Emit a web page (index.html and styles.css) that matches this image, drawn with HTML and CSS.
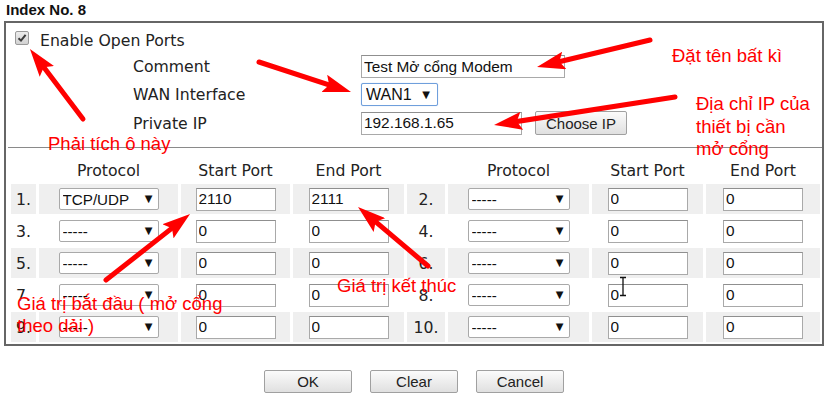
FILE: index.html
```html
<!DOCTYPE html>
<html lang="vi">
  <head>
    <meta charset="UTF-8" />
    <meta name="viewport" content="width=device-width, initial-scale=1.0" />
    <title>Open Ports - Index No. 8</title>
    <link rel="stylesheet" href="styles.css">
  </head>
  <body>
    <div class="page">
      <div class="title">Index No. 8</div>
      <div class="box">
        <!-- bật mở cổng -->
        <div class="enable">
          <span class="check">
            <svg width="12" height="12" viewBox="0 0 12 12"><path d="M2.5 6.2 L5 8.6 L9.6 2.8" fill="none" stroke="#3c3c3c" stroke-width="2"/></svg>
          </span>
          <span class="enable-label">Enable Open Ports</span>
        </div>
        <!-- thông tin chung -->
        <div class="form">
          <label>Comment</label>
          <input class="text comment" type="text" value="Test Mở cổng Modem" />
          <label>WAN Interface</label>
          <span class="select wan"><select><option>WAN1</option></select></span>
          <label>Private IP</label>
          <div class="ip-row">
            <input class="text ip" type="text" value="192.168.1.65" />
            <button class="btn choose">Choose IP</button>
          </div>
        </div>
        <div class="divider"></div>
        <!-- bảng cổng -->
        <div class="ports">
          <div></div><div class="th">Protocol</div><div class="th">Start Port</div><div class="th">End Port</div>
          <div></div><div class="th">Protocol</div><div class="th">Start Port</div><div class="th">End Port</div>

          <div class="row shade">
            <div class="num">1.</div>
            <div class="cell"><span class="select"><select><option>TCP/UDP</option></select></span></div>
            <div class="cell"><input class="text port" value="2110" /></div>
            <div class="cell"><input class="text port" value="2111" /></div>
            <div class="num">2.</div>
            <div class="cell"><span class="select wide"><select><option>-----</option></select></span></div>
            <div class="cell"><input class="text port" value="0" /></div>
            <div class="cell"><input class="text port" value="0" /></div>
          </div>
          <div class="row">
            <div class="num">3.</div>
            <div class="cell"><span class="select"><select><option>-----</option></select></span></div>
            <div class="cell"><input class="text port" value="0" /></div>
            <div class="cell"><input class="text port" value="0" /></div>
            <div class="num">4.</div>
            <div class="cell"><span class="select wide"><select><option>-----</option></select></span></div>
            <div class="cell"><input class="text port" value="0" /></div>
            <div class="cell"><input class="text port" value="0" /></div>
          </div>
          <div class="row shade">
            <div class="num">5.</div>
            <div class="cell"><span class="select"><select><option>-----</option></select></span></div>
            <div class="cell"><input class="text port" value="0" /></div>
            <div class="cell"><input class="text port" value="0" /></div>
            <div class="num">6.</div>
            <div class="cell"><span class="select wide"><select><option>-----</option></select></span></div>
            <div class="cell"><input class="text port" value="0" /></div>
            <div class="cell"><input class="text port" value="0" /></div>
          </div>
          <div class="row">
            <div class="num">7.</div>
            <div class="cell"><span class="select"><select><option>-----</option></select></span></div>
            <div class="cell"><input class="text port" value="0" /></div>
            <div class="cell"><input class="text port" value="0" /></div>
            <div class="num">8.</div>
            <div class="cell"><span class="select wide"><select><option>-----</option></select></span></div>
            <div class="cell"><input class="text port" value="0" /></div>
            <div class="cell"><input class="text port" value="0" /></div>
          </div>
          <div class="row shade">
            <div class="num">9.</div>
            <div class="cell"><span class="select"><select><option>-----</option></select></span></div>
            <div class="cell"><input class="text port" value="0" /></div>
            <div class="cell"><input class="text port" value="0" /></div>
            <div class="num">10.</div>
            <div class="cell"><span class="select wide"><select><option>-----</option></select></span></div>
            <div class="cell"><input class="text port" value="0" /></div>
            <div class="cell"><input class="text port" value="0" /></div>
          </div>
        </div>
      </div>
      <!-- nút -->
      <div class="actions">
        <button class="btn">OK</button>
        <button class="btn">Clear</button>
        <button class="btn">Cancel</button>
      </div>

      <!-- ghi chú màu đỏ -->
      <div class="note note-name">Đặt tên bất kì</div>
      <div class="note note-ip">Địa chỉ IP của<br>thiết bị cần<br>mở cổng</div>
      <div class="note note-check">Phải tích ô này</div>
      <div class="note note-end">Giá trị kết thúc</div>
      <div class="note note-start">Giá trị bắt đầu ( mở cổng<br>theo dải )</div>

      <svg class="arrows" width="828" height="401" viewBox="0 0 828 401">
        <defs>
          <marker id="head" viewBox="0 0 28 18" markerWidth="28" markerHeight="18" refX="16" refY="9" orient="auto" markerUnits="userSpaceOnUse">
            <path d="M0 0 L28 9 L0 18 L5 9 Z" fill="#ff0000"/>
          </marker>
        </defs>
        <g stroke="#ff0000" stroke-width="5" stroke-linecap="round" marker-end="url(#head)">
          <line x1="83" y1="119" x2="37.2" y2="58.6"/>
          <line x1="259" y1="62" x2="339.6" y2="88.3"/>
          <line x1="650" y1="40" x2="548.7" y2="64.2"/>
          <line x1="675" y1="97" x2="505.9" y2="123.2"/>
          <line x1="106" y1="280" x2="180.6" y2="221.4"/>
          <line x1="428" y1="266" x2="367.2" y2="214.7"/>
        </g>
        <!-- con trỏ chữ -->
        <path d="M620 277.5 H626 M623 277.5 V295.5 M620 295.5 H626" stroke="#111" stroke-width="1.3" fill="none"/>
      </svg>
    </div>
  </body>
</html>
```

FILE: styles.css
```css
/* ベース */
body {
  margin: 0;
  font-family: "DejaVu Sans", "Noto Sans", sans-serif;
  font-size: 15.7px;
  color: #222;
  background-color: #fff;
}
.page {
  position: relative;
  width: 828px;
  height: 401px;
  overflow: hidden;
}
.title {
  font: bold 15px "Liberation Sans", Arial, sans-serif;
  color: #111;
  height: 20px;
  padding: 1px 0 0 6px;
}
.box {
  margin: 0 4px;
  border: 2px solid #666;
  padding-bottom: 2px;
}
/* enable */
.enable {
  display: flex;
  align-items: flex-start;
  gap: 11px;
  height: 16px;
  margin: 7px 0 9px 9px;
}
.check {
  width: 14px;
  height: 14px;
  margin-top: 1px;
  box-sizing: border-box;
  border: 1px solid #9a9a9a;
  border-radius: 2px;
  background: linear-gradient(#ececec, #d2d2d2);
  display: flex;
  align-items: center;
  justify-content: center;
}
.enable-label {
  line-height: 18px;
  margin-top: 2px;
}
/* form */
.form {
  display: grid;
  grid-template-columns: 228px 1fr;
  row-gap: 5px;
  align-items: center;
  justify-items: start;
  padding-left: 127px;
}
.ip-row {
  display: flex;
  align-items: center;
}
.text {
  box-sizing: border-box;
  height: 23px;
  border: 1px solid #a9a9a9;
  border-top-color: #8f8f8f;
  padding: 0 2px;
  font: 15.4px "Liberation Sans", Arial, sans-serif;
  color: #111;
  background: #fff;
  outline: none;
}
.comment {
  width: 204px;
}
.ip {
  width: 161px;
}
.port {
  width: 80px;
}
/* select */
.select {
  position: relative;
  display: inline-block;
  line-height: 0;
}
.select select {
  appearance: none;
  -webkit-appearance: none;
  box-sizing: border-box;
  width: 100px;
  height: 22px;
  border: 1px solid #a9a9a9;
  border-radius: 2px;
  background: #fff;
  padding: 0 0 0 3px;
  font: 15.2px "Liberation Sans", Arial, sans-serif;
  color: #111;
  outline: none;
}
.select::after {
  content: "▼";
  position: absolute;
  right: 6px;
  top: 11px;
  font: 10px/1 "DejaVu Sans", sans-serif;
  margin-top: -5px;
  color: #111;
  pointer-events: none;
}
.select.wide select {
  width: 102px;
}
.select.wan select {
  width: 77px;
  height: 23px;
  padding-left: 4px;
  font-size: 16px;
  border-color: #6f9fdc;
  box-shadow: 0 0 1px #9ec0ea;
}
.select.wan::after {
  right: 8px;
  top: 12px;
}
/* buttons */
.btn {
  box-sizing: border-box;
  width: 88px;
  height: 23px;
  border: 1px solid #a0a0a0;
  border-radius: 2px;
  background: linear-gradient(#fbfbfb, #e0e0e0);
  font: 15px "Liberation Sans", Arial, sans-serif;
  color: #222;
  padding: 0;
}
.choose {
  width: 92px;
  height: 24px;
  margin-left: 13px;
}
.divider {
  margin: 12px 0 0 2px;
  border-top: 1px solid #8a8a8a;
}
/* ports table */
.ports {
  display: grid;
  grid-template-columns: 25px 139px 109px 111px 38px 141px 111px 114px;
  grid-template-rows: 34px repeat(5, 30px);
  column-gap: 3px;
  row-gap: 2px;
  margin-left: 5px;
}
.th {
  display: flex;
  align-items: flex-end;
  justify-content: center;
  line-height: 18px;
  padding-bottom: 2px;
}
.row {
  display: contents;
}
.row.shade > div {
  background-color: #efefef;
}
.num,
.cell {
  display: flex;
  align-items: center;
  justify-content: center;
}
.actions {
  display: flex;
  justify-content: center;
  gap: 18px;
  margin-top: 24px;
}
/* annotations */
.note {
  position: absolute;
  font: 18.5px "Liberation Sans", Arial, sans-serif;
  line-height: 22px;
  color: #ff0000;
  white-space: nowrap;
}
.note-name {
  left: 672px;
  top: 45px;
}
.note-ip {
  left: 696px;
  top: 93px;
  line-height: 22.5px;
}
.note-check {
  left: 48px;
  top: 133px;
}
.note-end {
  left: 337px;
  top: 275px;
}
.note-start {
  left: 17px;
  top: 293px;
}
.arrows {
  position: absolute;
  left: 0;
  top: 0;
  pointer-events: none;
}
```
